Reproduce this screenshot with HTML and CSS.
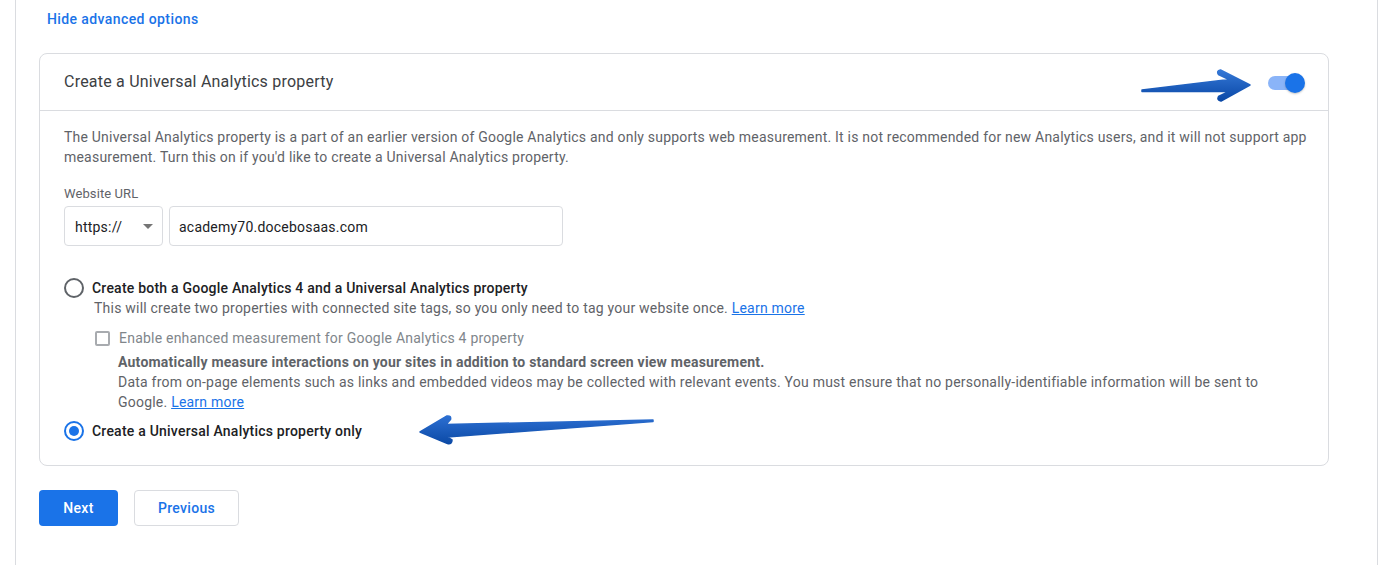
FILE: index.html
```html
<!DOCTYPE html>
<html lang="en">
<head>
<meta charset="utf-8">
<title>Create a Universal Analytics property</title>
<link rel="stylesheet" href="styles.css">
</head>
<body>
<div class="page">
  <div class="content">
    <a class="adv-link" href="#">Hide advanced options</a>

    <section class="card">
      <header class="card-head">
        <h2 class="card-title">Create a Universal Analytics property</h2>
        <span class="toggle"><span class="toggle-track"></span><span class="toggle-knob"></span></span>
      </header>
      <div class="card-body">
        <p class="desc">The Universal Analytics property is a part of an earlier version of Google Analytics and only supports web measurement. It is not recommended for new Analytics users, and it will not support app measurement. Turn this on if you'd like to create a Universal Analytics property.</p>

        <div class="field-label">Website URL</div>
        <div class="url-row">
          <div class="select">
            <span>https://</span>
            <span class="caret"></span>
          </div>
          <div class="input">academy70.docebosaas.com</div>
        </div>

        <div class="option first">
          <span class="radio"></span>
          <span class="opt-label">Create both a Google Analytics 4 and a Universal Analytics property</span>
        </div>
        <div class="opt-sub">This will create two properties with connected site tags, so you only need to tag your website once. <a href="#" class="link">Learn more</a></div>

        <div class="check-row">
          <span class="checkbox"></span>
          <span class="check-label">Enable enhanced measurement for Google Analytics 4 property</span>
        </div>
        <div class="check-desc">
          <div class="check-bold">Automatically measure interactions on your sites in addition to standard screen view measurement.</div>
          <div>Data from on-page elements such as links and embedded videos may be collected with relevant events. You must ensure that no personally-identifiable information will be sent to Google. <a href="#" class="link">Learn more</a></div>
        </div>

        <div class="option last">
          <span class="radio checked"></span>
          <span class="opt-label">Create a Universal Analytics property only</span>
        </div>
      </div>
    </section>

    <div class="actions">
      <button class="btn primary">Next</button>
      <button class="btn outline">Previous</button>
    </div>
  </div>
</div>

<svg class="annotations" width="1380" height="565" viewBox="0 0 1380 565" xmlns="http://www.w3.org/2000/svg">
  <defs>
    <linearGradient id="g1" x1="0" y1="0" x2="0" y2="1">
      <stop offset="0" stop-color="#3477d6"/>
      <stop offset="1" stop-color="#0a48a6"/>
    </linearGradient>
    <linearGradient id="g2" x1="0" y1="0" x2="0" y2="1">
      <stop offset="0" stop-color="#2c6fd2"/>
      <stop offset="1" stop-color="#0c4aa6"/>
    </linearGradient>
  </defs>
  <path fill="url(#g1)" stroke="url(#g1)" stroke-width="1.5" stroke-linejoin="round"
        d="M1142 90 L1229 79.5 L1218.5 74.5 Q1216 71 1220.5 70 L1250 85 L1221 101 Q1216.5 100 1218.5 96.5 L1229 91.5 L1142 91.5 Z"/>
  <path fill="url(#g2)" stroke="url(#g2)" stroke-width="1.5" stroke-linejoin="round"
        d="M653 420 L653 421.5 L447 437 L452 440 Q452 444.5 447.5 443.5 L420 432 L447 416 Q451.5 415.5 450.5 419.5 L446 424.5 Z"/>
</svg>
</body>
</html>
```

FILE: styles.css
```css
* { box-sizing: border-box; }

html, body {
  margin: 0;
  padding: 0;
  background: #ffffff;
}

body {
  font-family: Roboto, "Noto Sans", Arial, sans-serif;
  color: #202124;
  font-size: 14px;
  line-height: 20px;
  letter-spacing: 0.22px;
  width: 1380px;
  height: 565px;
  overflow: hidden;
  position: relative;
}

.page {
  margin-left: 15px;
  width: 1363px;
  height: 565px;
  border-left: 1px solid #dadce0;
  border-right: 1px solid #dadce0;
}

.content {
  padding: 9px 48px 0 23px;
}

.adv-link {
  display: inline-block;
  margin-left: 8px;
  color: #1a73e8;
  font-weight: 500;
  text-decoration: none;
  font-size: 14px;
  line-height: 20px;
  letter-spacing: 0.4px;
}

.card {
  margin-top: 24px;
  border: 1px solid #dadce0;
  border-radius: 8px;
}

.card-head {
  height: 57px;
  border-bottom: 1px solid #dadce0;
  display: flex;
  align-items: center;
  justify-content: space-between;
  padding: 0 23px 0 24px;
}

.card-title {
  margin: 0;
  font-size: 16px;
  font-weight: 400;
  color: #3c4043;
  line-height: 24px;
  letter-spacing: 0.22px;
}

.toggle {
  position: relative;
  width: 37px;
  height: 20px;
  display: block;
  margin-top: 1px;
}

.toggle-track {
  position: absolute;
  left: 0;
  top: 3px;
  width: 33px;
  height: 14px;
  border-radius: 7px;
  background: #8ab4f8;
}

.toggle-knob {
  position: absolute;
  right: 0;
  top: 0;
  width: 20px;
  height: 20px;
  border-radius: 50%;
  background: #1a73e8;
  box-shadow: 0 1px 2px rgba(60, 64, 67, 0.3);
}

.card-body {
  padding: 16px 12px 24px 24px;
}

.desc {
  margin: 0;
  color: #5f6368;
  letter-spacing: 0.21px;
}

.field-label {
  margin-top: 16px;
  font-size: 13px;
  color: #5f6368;
  letter-spacing: 0.1px;
  line-height: 21px;
}

.url-row {
  display: flex;
  gap: 6px;
  margin-top: 2px;
}

.select, .input {
  height: 40px;
  border: 1px solid #dadce0;
  border-radius: 4px;
  display: flex;
  align-items: center;
  padding-left: 10px;
  color: #202124;
  padding-top: 1px;
}

.select {
  width: 99px;
  justify-content: space-between;
  padding-right: 9px;
}

.caret {
  width: 0;
  height: 0;
  border-left: 5px solid transparent;
  border-right: 5px solid transparent;
  border-top: 5px solid #757575;
}

.input {
  width: 394px;
  padding-left: 9px;
}

.option {
  display: flex;
  align-items: center;
  gap: 8px;
}

.option.first { margin-top: 32px; }
.option.last { margin-top: 9px; }

.radio {
  width: 20px;
  height: 20px;
  border: 2px solid #5f6368;
  border-radius: 50%;
  flex: none;
  position: relative;
}

.radio.checked {
  border-color: #1a73e8;
}

.radio.checked::after {
  content: "";
  position: absolute;
  left: 3px;
  top: 3px;
  width: 10px;
  height: 10px;
  border-radius: 50%;
  background: #1a73e8;
}

.opt-label {
  font-weight: 500;
  color: #202124;
}

.opt-sub {
  padding-left: 30px;
  color: #5f6368;
}

.link {
  color: #1a73e8;
  text-decoration: underline;
}

.check-row {
  display: flex;
  align-items: center;
  gap: 9px;
  margin-top: 10px;
  padding-left: 31px;
}

.checkbox {
  width: 15px;
  height: 15px;
  border: 2px solid #a8abaf;
  border-radius: 2px;
  flex: none;
}

.check-label {
  color: #80868b;
}

.check-desc {
  margin-top: 4px;
  padding-left: 54px;
  padding-right: 36px;
  color: #5f6368;
}

.check-bold {
  font-weight: 700;
  color: #5f6368;
}

.actions {
  display: flex;
  gap: 16px;
  margin-top: 24px;
}

.btn {
  font-family: Roboto, "Noto Sans", Arial, sans-serif;
  font-size: 14px;
  font-weight: 500;
  letter-spacing: 0.3px;
  height: 36px;
  border-radius: 4px;
  padding: 0;
  cursor: pointer;
}

.btn.primary {
  width: 79px;
  background: #1a73e8;
  color: #ffffff;
  border: none;
}

.btn.outline {
  width: 105px;
  background: #ffffff;
  color: #1a73e8;
  border: 1px solid #dadce0;
}

.annotations {
  position: absolute;
  left: 0;
  top: 0;
  pointer-events: none;
}
```
